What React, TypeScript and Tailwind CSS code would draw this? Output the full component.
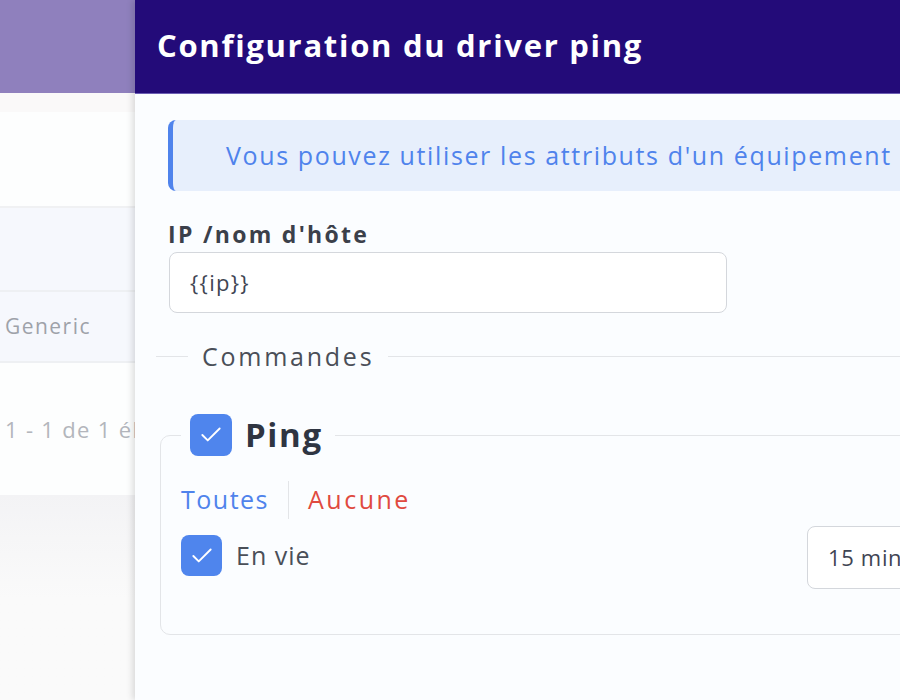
import { Check } from "lucide-react";

const font = { fontFamily: '"Open Sans", "DejaVu Sans", sans-serif' };

function Box({ size }: { size: string }) {
  return (
    <span className={`${size} flex shrink-0 items-center justify-center rounded-[8px] bg-[#4f85ed]`}>
      <Check className="w-[26px] h-[26px] text-white" strokeWidth={1.75} />
    </span>
  );
}

export default function App() {
  return (
    <div className="flex w-[900px] h-[700px] overflow-hidden bg-[#fafafa]" style={font}>
      {/* page behind the drawer */}
      <div className="flex w-[135px] shrink-0 flex-col overflow-hidden">
        <div className="h-[93px] bg-[#8f80bd]" />
        <div className="h-[19px] bg-[#faf9f9]" />
        <div className="h-[96px] bg-[#fdfefe] border-b-2 border-[#f0f1f3]" />
        <div className="h-[84px] bg-[#f6f8fd] border-b-2 border-[#eef0f3]" />
        <div className="flex h-[71px] items-center bg-[#f6f8fd] border-b-2 border-[#eef0f3] pl-[5px] text-[21px] tracking-[0.07em] text-[#9ea2a9]">
          Generic
        </div>
        <div className="flex h-[132px] items-center whitespace-nowrap bg-[#fdfefe] pl-[5px] text-[22px] tracking-[0.06em] text-[#b3b6bc]">
          1 - 1 de 1 él
        </div>
        <div className="flex-1 bg-gradient-to-b from-[#f3f3f5] via-[#fafafa] to-[#fafafa]" />
      </div>

      {/* drawer */}
      <div className="relative flex flex-1 flex-col overflow-hidden bg-[#fbfdff] shadow-[-3px_0_6px_rgba(0,0,0,0.12)]">
        <div className="flex h-[94px] shrink-0 items-center border-b border-[#6c5eb4] bg-[#230b79] pl-[22px] pb-[2px]">
          <h1 className="whitespace-nowrap text-[31px] font-bold tracking-[0.055em] text-white">
            Configuration du driver ping
          </h1>
        </div>

        <div className="flex flex-col pl-[33px]">
          <div className="mt-[26px] flex h-[71px] w-[900px] items-center rounded-l-[8px] border-l-[5px] border-[#4f83ec] bg-[#e7effc] pl-[53px] whitespace-nowrap text-[25px] tracking-[0.065em] text-[#4f83ec]">
            Vous pouvez utiliser les attributs d'un équipement
          </div>

          <label className="mt-[28px] text-[23px] font-bold leading-[30px] tracking-[0.1em] text-[#3b404a]">IP /nom d'hôte</label>
          <div className="mt-[3px] ml-[1px] flex h-[61px] w-[558px] items-center rounded-[8px] border border-[#d4d7dc] bg-white pl-[20px] text-[22px] tracking-[0.06em] text-[#3f4553]">
            {"{{ip}}"}
          </div>

          <div className="-ml-[12px] mt-[25px] flex items-center">
            <span className="h-px w-[32px] bg-[#e3e5e8]" />
            <span className="px-[14px] text-[25px] leading-[36px] tracking-[0.11em] text-[#4a4f58]">Commandes</span>
            <span className="h-px flex-1 bg-[#e3e5e8]" />
          </div>

          <fieldset className="-ml-[8px] mt-[40px] w-[800px] rounded-[10px] border border-[#e3e5e8] px-[20px] pb-[45px]">
            <legend className="flex items-center gap-[13px] pl-[9px] pr-[12px]">
              <Box size="w-[42px] h-[42px]" />
              <span className="text-[33px] font-bold leading-[42px] tracking-[0.05em] text-[#2f3542]">Ping</span>
            </legend>

            <div className="mt-[25px] flex h-[38px] items-center text-[25px]">
              <button className="tracking-[0.06em] text-[#4f83ec]">Toutes</button>
              <span className="mx-[19px] h-[38px] w-px bg-[#e3e5e8]" />
              <button className="tracking-[0.1em] text-[#e04a40]">Aucune</button>
            </div>

            <div className="mt-[7px] grid h-[63px] grid-cols-[626px_1fr] items-center">
              <div className="mb-[4px] flex items-center gap-[14px]">
                <Box size="w-[41px] h-[41px]" />
                <span className="text-[25px] tracking-[0.04em] text-[#4a4f58]">En vie</span>
              </div>
              <div className="flex h-[63px] w-[200px] items-center rounded-[8px] border border-[#d4d7dc] bg-white pl-[20px] text-[22px] tracking-[0.03em] text-[#3f4553]">
                15 min
              </div>
            </div>
          </fieldset>
        </div>
      </div>
    </div>
  );
}
